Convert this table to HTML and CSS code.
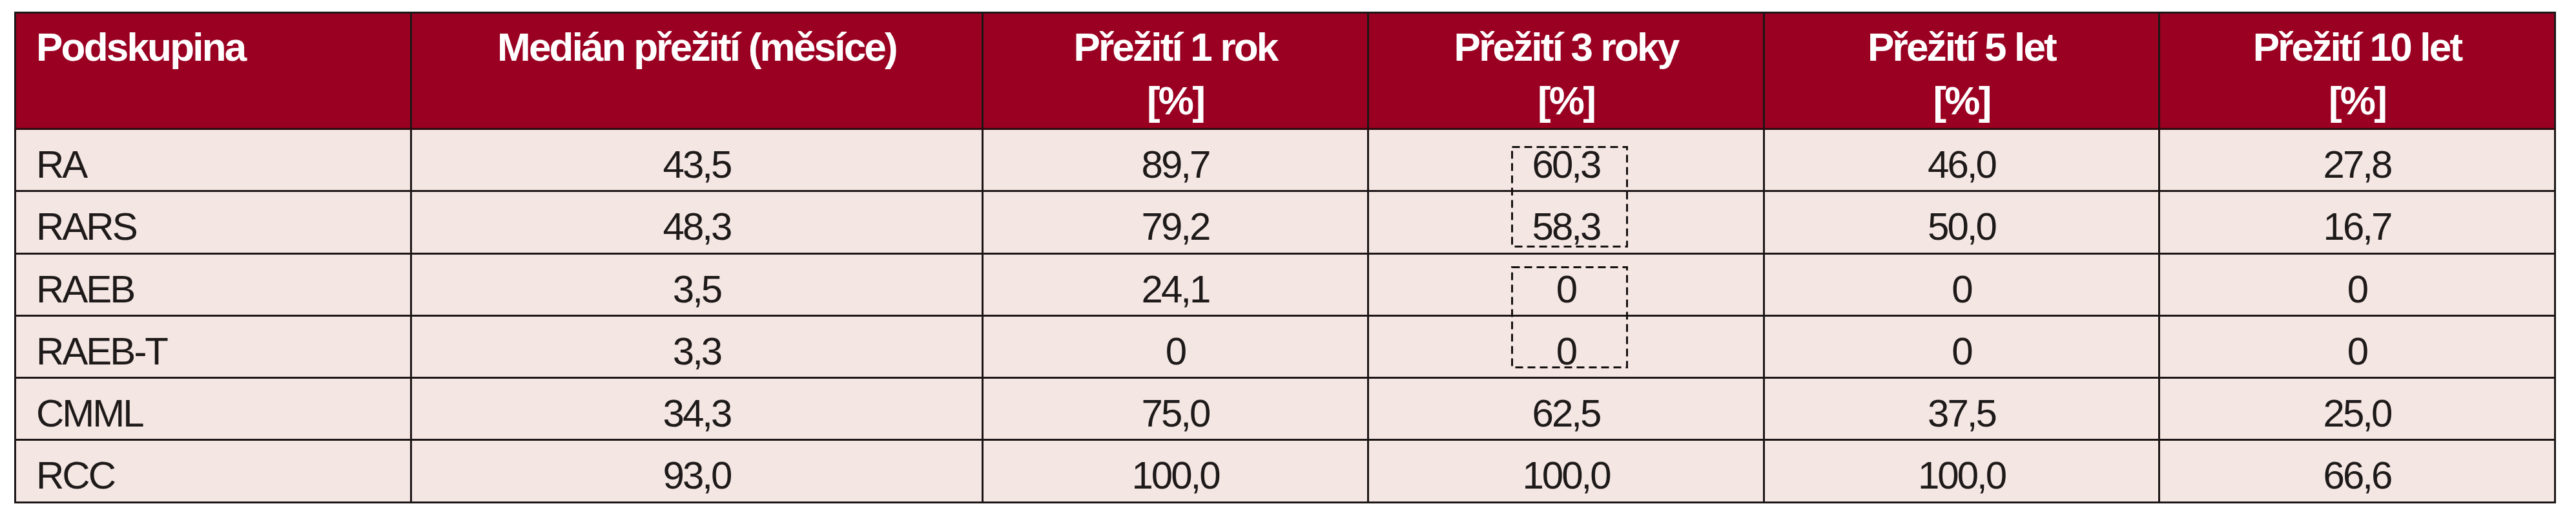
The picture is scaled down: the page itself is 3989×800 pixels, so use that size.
FILE: index.html
```html
<!DOCTYPE html>
<html lang="cs">
<head>
<meta charset="utf-8">
<title>Přežití podle podskupin</title>
<link rel="stylesheet" href="styles.css">
</head>
<body>
<table class="survival">
  <colgroup>
    <col class="c-group">
    <col class="c-median">
    <col class="c-y1">
    <col class="c-y3">
    <col class="c-y5">
    <col class="c-y10">
  </colgroup>
  <thead>
    <tr class="head-row">
      <th class="left">Podskupina</th>
      <th>Medián přežití (měsíce)</th>
      <th>Přežití 1 rok<br>[%]</th>
      <th>Přežití 3 roky<br>[%]</th>
      <th>Přežití 5 let<br>[%]</th>
      <th>Přežití 10 let<br>[%]</th>
    </tr>
  </thead>
  <tbody>
    <tr>
      <td class="left">RA</td><td>43,5</td><td>89,7</td>
      <td class="boxed">60,3<svg class="dash-box box-a" width="181" height="157" viewBox="0 0 181 157"><rect x="1.5" y="1.5" width="178" height="154"/></svg></td>
      <td>46,0</td><td>27,8</td>
    </tr>
    <tr>
      <td class="left">RARS</td><td>48,3</td><td>79,2</td><td>58,3</td><td>50,0</td><td>16,7</td>
    </tr>
    <tr>
      <td class="left">RAEB</td><td>3,5</td><td>24,1</td>
      <td class="boxed">0<svg class="dash-box box-b" width="181" height="158" viewBox="0 0 181 158"><rect x="1.5" y="1.5" width="178" height="155"/></svg></td>
      <td>0</td><td>0</td>
    </tr>
    <tr>
      <td class="left">RAEB-T</td><td>3,3</td><td>0</td><td>0</td><td>0</td><td>0</td>
    </tr>
    <tr>
      <td class="left">CMML</td><td>34,3</td><td>75,0</td><td>62,5</td><td>37,5</td><td>25,0</td>
    </tr>
    <tr>
      <td class="left">RCC</td><td>93,0</td><td>100,0</td><td>100,0</td><td>100,0</td><td>66,6</td>
    </tr>
  </tbody>
</table>
</body>
</html>
```

FILE: styles.css
```css
html, body {
  margin: 0;
  padding: 0;
  background: #ffffff;
}

body {
  padding: 18px 0 0 22px;
  font-family: "Liberation Sans", Arial, sans-serif;
}

.survival {
  border-collapse: collapse;
  table-layout: fixed;
  width: 3936px;
}

.c-group  { width: 613px; }
.c-median { width: 885px; }
.c-y1     { width: 597px; }
.c-y3     { width: 613px; }
.c-y5     { width: 612px; }
.c-y10    { width: 613px; }

.survival th,
.survival td {
  border: 3px solid #1c1616;
  padding: 0;
  text-align: center;
}

.head-row {
  height: 180px;
}

.survival th {
  background: #9a0021;
  color: #ffffff;
  font-weight: 700;
  font-size: 62px;
  line-height: 83px;
  letter-spacing: -2.8px;
  vertical-align: top;
  padding-top: 10px;
  border-bottom-color: #2a0a0e;
}

.survival td {
  background: #f4e6e3;
  color: #1e1a1a;
  font-weight: 400;
  font-size: 60px;
  line-height: 60px;
  letter-spacing: -3px;
  height: 96.3px;
  vertical-align: top;
  padding-top: 24px;
  box-sizing: border-box;
}

.survival .left {
  text-align: left;
  padding-left: 31px;
}

.boxed {
  position: relative;
}

.dash-box {
  position: absolute;
  left: 50%;
  margin-left: -85px;
  overflow: visible;
}

.dash-box rect {
  fill: none;
  stroke: #141010;
  stroke-width: 3;
  stroke-dasharray: 12 7;
}

.box-a { top: 25px; }
.box-b { top: 18px; }
```
